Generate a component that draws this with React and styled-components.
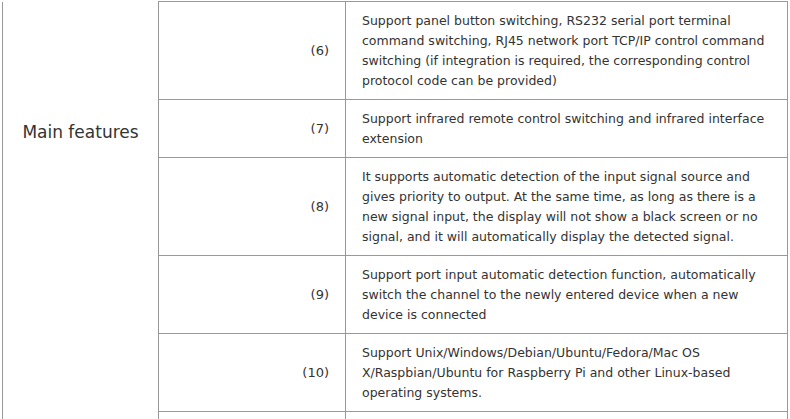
import React from "react";
import styled, { createGlobalStyle } from "styled-components";

const Global = createGlobalStyle`
  html, body { margin: 0; padding: 0; background: #fff; }
  body { padding: 1px 0 0 2px; font-family: "DejaVu Sans", Verdana, sans-serif; color: #333; }
`;

const Table = styled.table`
  border-collapse: collapse;
  width: 786px;
  table-layout: fixed;
`;

const Cell = styled.td`
  border: 1px solid #999;
  font-size: 12.5px;
  line-height: 20px;
  color: #333;
  padding: 9px 16px 8px;
  vertical-align: middle;
`;

const LabelCell = styled(Cell)`
  border-top: none;
  width: 155px;
  padding: 119px 0 0;
  vertical-align: top;
  text-align: center;
  font-size: 17px;
  line-height: 22px;
`;

const NumCell = styled(Cell)`
  width: 154px;
  text-align: right;
  font-size: 13px;
`;

const DescCell = styled(Cell)`
  text-align: left;
`;

const rows = [
  ["(6)", "Support panel button switching, RS232 serial port terminal command switching, RJ45 network port TCP/IP control command switching (if integration is required, the corresponding control protocol code can be provided)"],
  ["(7)", "Support infrared remote control switching and infrared interface extension"],
  ["(8)", "It supports automatic detection of the input signal source and gives priority to output. At the same time, as long as there is a new signal input, the display will not show a black screen or no signal, and it will automatically display the detected signal."],
  ["(9)", "Support port input automatic detection function, automatically switch the channel to the newly entered device when a new device is connected"],
  ["(10)", "Support Unix/Windows/Debian/Ubuntu/Fedora/Mac OS X/Raspbian/Ubuntu for Raspberry Pi and other Linux-based operating systems."],
  ["", ""],
];

export default function App() {
  return (
    <>
      <Global />
      <Table>
        <tbody>
          {rows.map(([n, d], i) => (
            <tr key={i}>
              {i === 0 && <LabelCell rowSpan={rows.length}>Main features</LabelCell>}
              <NumCell>{n}</NumCell>
              <DescCell>{d || "\u00a0"}</DescCell>
            </tr>
          ))}
        </tbody>
      </Table>
    </>
  );
}
